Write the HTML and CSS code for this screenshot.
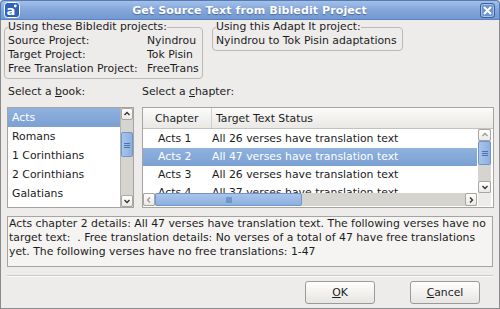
FILE: index.html
```html
<!DOCTYPE html>
<html>
<head>
<meta charset="utf-8">
<link rel="stylesheet" href="styles.css">
</head>
<body>
<div class="window">
  <div class="titlebar">
    <svg class="appicon" width="16" height="16" viewBox="0 0 16 16">
      <rect x="0.5" y="0.5" width="15" height="15" rx="3" fill="#2d63bd" stroke="#ffffff"/>
      <text x="7" y="13" font-family="DejaVu Sans" font-weight="bold" font-size="13" fill="#ffffff" text-anchor="middle">a</text>
      <circle cx="11.3" cy="4" r="1.4" fill="#ffffff"/>
    </svg>
    <div class="title">Get Source Text from Bibledit Project</div>
    <div class="closebtn">
      <svg width="15" height="15" viewBox="0 0 15 15">
        <rect x="0.5" y="0.5" width="14" height="14" rx="2.5" fill="#6d94cf" stroke="#3c5f99"/>
        <rect x="1.5" y="1.5" width="12" height="12" rx="2" fill="none" stroke="#a9c2e8"/>
        <path d="M4.5 4.5 L10.5 10.5 M10.5 4.5 L4.5 10.5" stroke="#ffffff" stroke-width="2" stroke-linecap="round"/>
      </svg>
    </div>
  </div>
  <div class="content">
    <div class="groups">
      <fieldset class="group g1">
        <legend>Using these Bibledit projects:</legend>
        <div class="kv">
          <span>Source Project:</span><span>Nyindrou</span>
          <span>Target Project:</span><span>Tok Pisin</span>
          <span>Free Translation Project:</span><span>FreeTrans</span>
        </div>
      </fieldset>
      <fieldset class="group g2">
        <legend>Using this Adapt It project:</legend>
        <div class="line">Nyindrou to Tok Pisin adaptations</div>
      </fieldset>
    </div>
    <div class="lower">
      <div class="lists">
        <div class="bookcol">
          <div class="label book-label">Select a <u>b</u>ook:</div>
          <div class="bookbox">
            <div class="booklist">
              <div class="brow sel">Acts</div>
              <div class="brow">Romans</div>
              <div class="brow">1 Corinthians</div>
              <div class="brow">2 Corinthians</div>
              <div class="brow">Galatians</div>
            </div>
            <div class="vscroll book-vs">
              <div class="sbtn"><svg width="10" height="10" viewBox="0 0 10 10"><path d="M2.5 6 L5 3.5 L7.5 6" fill="none" stroke="#333" stroke-width="1.4"/></svg></div>
              <div class="trough">
                <div class="vthumb book-thumb"><svg width="6" height="6" viewBox="0 0 6 6"><path d="M0 1.5H6M0 3.5H6M0 5.5H6" stroke="#4a73ad" stroke-width="1"/></svg></div>
              </div>
              <div class="sbtn"><svg width="10" height="10" viewBox="0 0 10 10"><path d="M2.5 4 L5 6.5 L7.5 4" fill="none" stroke="#333" stroke-width="1.4"/></svg></div>
            </div>
          </div>
        </div>
        <div class="chapcol">
          <div class="label">Select a <u>c</u>hapter:</div>
          <div class="chapbox">
            <div class="header">
              <div class="hcol c1">Chapter</div>
              <div class="hcol c2">Target Text Status</div>
            </div>
            <div class="chapbody">
              <div class="chapmain">
                <div class="chaprows">
                  <div class="crow"><span class="cc1">Acts 1</span><span class="cc2">All 26 verses have translation text</span></div>
                  <div class="crow sel"><span class="cc1">Acts 2</span><span class="cc2">All 47 verses have translation text</span></div>
                  <div class="crow"><span class="cc1">Acts 3</span><span class="cc2">All 26 verses have translation text</span></div>
                  <div class="crow"><span class="cc1">Acts 4</span><span class="cc2">All 37 verses have translation text</span></div>
                </div>
                <div class="hscroll">
                  <div class="sbtn hbtn"><svg width="10" height="10" viewBox="0 0 10 10"><path d="M6 2.5 L3.5 5 L6 7.5" fill="none" stroke="#9a9a9a" stroke-width="1.3"/></svg></div>
                  <div class="htrough">
                    <div class="hthumb"><svg width="6" height="6" viewBox="0 0 6 6"><path d="M1 0V6M3 0V6M5 0V6" stroke="#4a73ad" stroke-width="1"/></svg></div>
                  </div>
                  <div class="sbtn hbtn"><svg width="10" height="10" viewBox="0 0 10 10"><path d="M4 2.5 L6.5 5 L4 7.5" fill="none" stroke="#333" stroke-width="1.4"/></svg></div>
                </div>
              </div>
              <div class="vcol">
                <div class="vscroll chap-vs">
                  <div class="sbtn"><svg width="10" height="10" viewBox="0 0 10 10"><path d="M2.5 6 L5 3.5 L7.5 6" fill="none" stroke="#9a9a9a" stroke-width="1.3"/></svg></div>
                  <div class="trough">
                    <div class="vthumb chap-thumb"><svg width="6" height="6" viewBox="0 0 6 6"><path d="M0 1.5H6M0 3.5H6M0 5.5H6" stroke="#4a73ad" stroke-width="1"/></svg></div>
                  </div>
                  <div class="sbtn"><svg width="10" height="10" viewBox="0 0 10 10"><path d="M2.5 4 L5 6.5 L7.5 4" fill="none" stroke="#333" stroke-width="1.4"/></svg></div>
                </div>
                <div class="corner"></div>
              </div>
            </div>
          </div>
        </div>
      </div>
      <div class="details">Acts chapter 2 details: All 47 verses have translation text. The following verses have no<br>target text: &nbsp;. Free translation details: No verses of a total of 47 have free translations<br>yet. The following verses have no free translations: 1-47</div>
      <div class="sep"></div>
      <div class="buttons">
        <div class="btn"><u>O</u>K</div>
        <div class="btn"><u>C</u>ancel</div>
      </div>
    </div>
  </div>
</div>
</body>
</html>
```

FILE: styles.css
```css
* { box-sizing: border-box; }
html, body { margin: 0; padding: 0; }
body {
  width: 500px;
  height: 309px;
  overflow: hidden;
  background: #edeceb;
  font-family: "DejaVu Sans", "Liberation Sans", sans-serif;
  font-size: 10.85px;
  color: #1c1c1c;
}
u { text-decoration: underline; text-underline-offset: 1px; }

.window {
  width: 500px;
  height: 309px;
  display: flex;
  flex-direction: column;
}

/* title bar */
.titlebar {
  height: 20px;
  flex: none;
  display: grid;
  grid-template-columns: 1fr auto 1fr;
  align-items: center;
  padding: 0 4px 0 3px;
  background: linear-gradient(#a3c0e8 0%, #86a8dc 45%, #7199d3 100%);
  border: 1px solid #5479b3;
  border-bottom: 1px solid #5d82bb;
  border-radius: 4px 4px 0 0;
}
.appicon { display: block; }
.title {
  font-weight: bold;
  font-size: 11px;
  color: #ffffff;
  text-shadow: 0 1px 1px rgba(40, 60, 100, 0.55);
  letter-spacing: 0.1px;
}
.closebtn { justify-self: end; display: flex; }
.closebtn svg { display: block; }

/* content */
.content {
  flex: 1;
  border: 1px solid #8a8a8a;
  border-top: none;
  padding: 0 5px 0 3px;
  background: #edeceb;
}
.groups { display: flex; align-items: flex-start; }
.group {
  margin: 0;
  min-width: 0;
  border: 1px solid #bbb9b3;
  border-radius: 4px;
  padding: 0 3px 2px 3px;
}
.group legend {
  padding: 0;
  line-height: 14px;
  white-space: nowrap;
}
.g1 { width: 199px; }
.g2 { width: 191px; margin-left: 9px; padding-right: 1px; }
.kv {
  display: grid;
  grid-template-columns: 139px auto;
  line-height: 14px;
  white-space: nowrap;
}
.line { line-height: 14px; white-space: nowrap; }

.lower { padding-left: 3px; }
.lists { display: flex; gap: 8px; }
.bookcol { width: 127px; flex: none; }
.chapcol { flex: 1; min-width: 0; }
.label {
  line-height: 14px;
  margin-top: 6px;
  margin-bottom: 8px;
  white-space: nowrap;
}
.book-label { padding-left: 1px; }

/* book list */
.bookbox {
  height: 101px;
  display: flex;
  border: 1px solid #a6a49e;
  background: #ffffff;
}
.booklist { flex: 1; overflow: hidden; }
.brow {
  height: 19px;
  line-height: 19px;
  padding-left: 4px;
  white-space: nowrap;
}
.sel {
  background: linear-gradient(#8fb2de, #7ba0d2);
  color: #ffffff;
}

/* scrollbars */
.vscroll {
  width: 12px;
  display: flex;
  flex-direction: column;
  background: #d8d6d1;
}
.book-vs { border-left: 1px solid #b5b3ad; width: 13px; }
.sbtn {
  height: 12px;
  flex: none;
  display: flex;
  align-items: center;
  justify-content: center;
  background: linear-gradient(#ffffff, #ebe9e6);
  border: 1px solid #a8a6a0;
  border-radius: 2px;
}
.sbtn svg { display: block; }
.trough { flex: 1; min-height: 0; background: #d6d4cf; }
.vthumb {
  display: flex;
  align-items: center;
  justify-content: center;
  background: linear-gradient(90deg, #a8c4ea, #8db0e0);
  border: 1px solid #6f95cb;
  border-radius: 2px;
}
.book-thumb { margin-top: 12px; height: 25px; }
.chap-thumb { height: 24px; }

/* chapter list */
.chapbox {
  height: 101px;
  border: 1px solid #a6a49e;
  background: #ffffff;
  display: flex;
  flex-direction: column;
}
.header {
  height: 21px;
  flex: none;
  display: flex;
  background: linear-gradient(#fbfbfa, #e9e8e5);
  border-bottom: 1px solid #c4c2bd;
}
.hcol { line-height: 20px; padding-top: 1px; white-space: nowrap; }
.c1 { width: 69px; padding-left: 12px; border-right: 1px solid #d2d0cb; }
.c2 { padding-left: 4px; }
.chapbody { height: 77px; flex: none; display: flex; }
.chapmain { flex: 1; min-width: 0; display: flex; flex-direction: column; }
.chaprows { height: 64px; padding-top: 1px; overflow: hidden; flex: none; }
.crow {
  height: 18px;
  line-height: 18px;
  display: flex;
  white-space: nowrap;
}
.cc1 { width: 69px; flex: none; padding-left: 15px; }
.cc2 { padding-left: 0; }
.hscroll {
  height: 13px;
  display: flex;
  background: #d6d4cf;
}
.hbtn { width: 12px; height: 13px; }
.htrough { flex: 1; display: flex; background: #d6d4cf; }
.hthumb {
  width: 147px;
  display: flex;
  align-items: center;
  justify-content: center;
  background: linear-gradient(#a8c4ea, #8db0e0);
  border: 1px solid #6f95cb;
  border-radius: 2px;
}
.hthumb svg, .vthumb svg { display: block; }
.vcol {
  width: 13px;
  margin-right: 2px;
  margin-left: 1px;
  display: flex;
  flex-direction: column;
}
.chap-vs { height: 64px; flex: none; width: 13px; }
.corner { flex: 1; background: #edeceb; }

/* details */
.details {
  margin-top: 8px;
  margin-right: 1px;
  height: 51px;
  border: 1px solid #a6a49e;
  background: #f5f4f2;
  padding: 0 2px 6px 1px;
  line-height: 14px;
  white-space: nowrap;
  overflow: hidden;
}
.sep {
  margin-top: 8px;
  margin-right: 1px;
  height: 2px;
  border-top: 1px solid #cdcbc6;
  border-bottom: 1px solid #fbfbfa;
}
.buttons {
  margin-top: 4px;
  display: flex;
  justify-content: flex-end;
  gap: 35px;
  margin-right: 14px;
}
.btn {
  width: 70px;
  height: 23px;
  line-height: 21px;
  text-align: center;
  border: 1px solid #9c9a94;
  border-radius: 3px;
  background: linear-gradient(#fefefe, #e7e5e2);
}
```
